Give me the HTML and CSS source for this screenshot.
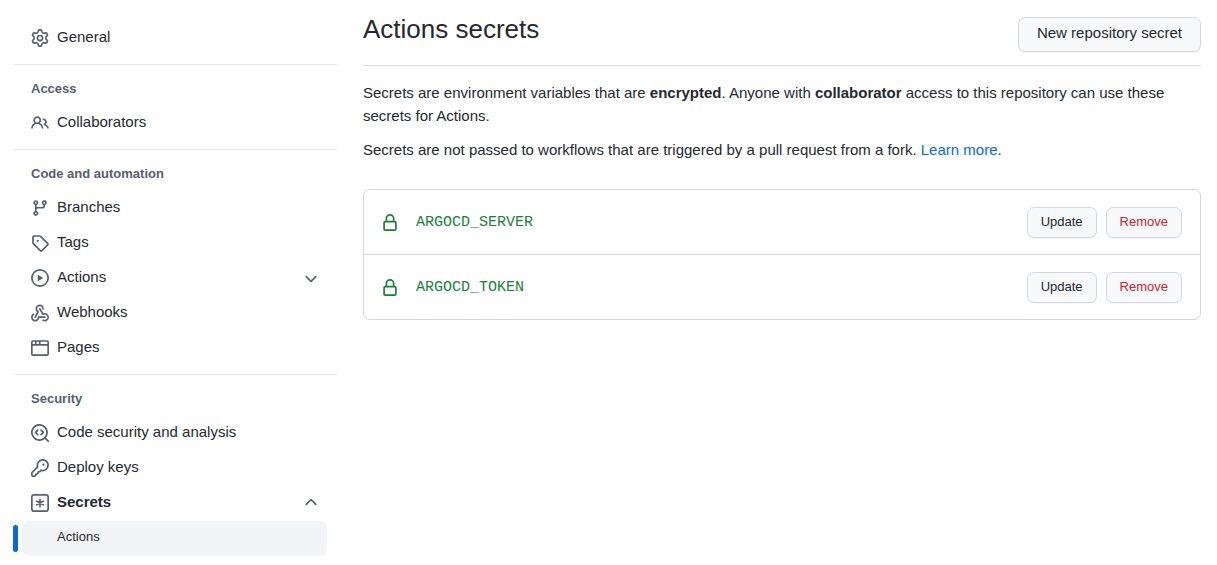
FILE: index.html
```html
<!DOCTYPE html>
<html lang="en">
<head>
<meta charset="utf-8">
<meta name="viewport" content="width=device-width, initial-scale=1">
<title>Actions secrets</title>
<link rel="stylesheet" href="styles.css">
</head>
<body>
<div class="layout">
  <nav class="sidebar" aria-label="Settings">
    <ul class="nav-list">
      <li><a class="nav-item" href="#general">
        <svg class="icon" viewBox="0 0 16 16" aria-hidden="true"><path fill-rule="evenodd" d="M8 0a8.2 8.2 0 0 1 .701.031C9.444.095 9.99.645 10.16 1.29l.288 1.107c.018.066.079.158.212.224.231.114.454.243.668.386.123.082.233.09.299.071l1.103-.303c.644-.176 1.392.021 1.82.63.27.385.506.792.704 1.218.315.675.111 1.422-.364 1.891l-.814.806c-.049.048-.098.147-.088.294.016.257.016.515 0 .772-.01.147.038.246.088.294l.814.806c.475.469.679 1.216.364 1.891a7.977 7.977 0 0 1-.704 1.217c-.428.61-1.176.807-1.82.63l-1.102-.302c-.067-.019-.177-.011-.3.071a5.909 5.909 0 0 1-.668.386c-.133.066-.194.158-.211.224l-.29 1.106c-.168.646-.715 1.196-1.458 1.26a8.006 8.006 0 0 1-1.402 0c-.743-.064-1.289-.614-1.458-1.26l-.289-1.106c-.018-.066-.079-.158-.212-.224a5.738 5.738 0 0 1-.668-.386c-.123-.082-.233-.09-.299-.071l-1.103.303c-.644.176-1.392-.021-1.82-.63a8.12 8.12 0 0 1-.704-1.218c-.315-.675-.111-1.422.363-1.891l.815-.806c.05-.048.098-.147.088-.294a6.214 6.214 0 0 1 0-.772c.01-.147-.038-.246-.088-.294l-.815-.806C.635 6.045.431 5.298.746 4.623a7.92 7.92 0 0 1 .704-1.217c.428-.61 1.176-.807 1.82-.63l1.102.302c.067.019.177.011.3-.071.214-.143.437-.272.668-.386.133-.066.194-.158.211-.224l.29-1.106C6.009.645 6.556.095 7.299.03 7.53.01 7.764 0 8 0Zm-.571 1.525c-.036.003-.108.036-.137.146l-.289 1.105c-.147.561-.549.967-.998 1.189-.173.086-.34.183-.5.29-.417.278-.97.423-1.529.27l-1.103-.303c-.109-.03-.175.016-.195.045-.22.312-.412.644-.573.99-.014.031-.021.11.059.19l.815.806c.411.406.562.957.53 1.456a4.709 4.709 0 0 0 0 .582c.032.499-.119 1.05-.53 1.456l-.815.806c-.081.08-.073.159-.059.19.162.346.353.677.573.989.02.03.085.076.195.046l1.102-.303c.56-.153 1.113-.008 1.53.27.161.107.328.204.501.29.447.222.85.629.997 1.189l.289 1.105c.029.109.101.143.137.146a6.6 6.6 0 0 0 1.142 0c.036-.003.108-.036.137-.146l.289-1.105c.147-.561.549-.967.998-1.189.173-.086.34-.183.5-.29.417-.278.97-.423 1.529-.27l1.103.303c.109.029.175-.016.195-.045.22-.313.411-.644.573-.99.014-.031.021-.11-.059-.19l-.815-.806c-.411-.406-.562-.957-.53-1.456a4.709 4.709 0 0 0 0-.582c-.032-.499.119-1.05.53-1.456l.815-.806c.081-.08.073-.159.059-.19a6.464 6.464 0 0 0-.573-.989c-.02-.03-.085-.076-.195-.046l-1.102.303c-.56.153-1.113.008-1.53-.27a4.44 4.44 0 0 0-.501-.29c-.447-.222-.85-.629-.997-1.189l-.289-1.105c-.029-.11-.101-.143-.137-.146a6.6 6.6 0 0 0-1.142 0ZM11 8a3 3 0 1 1-6 0 3 3 0 0 1 6 0ZM9.5 8a1.5 1.5 0 1 0-3 0 1.5 1.5 0 0 0 3 0Z"/></svg>
        <span class="nav-label">General</span></a></li>
    </ul>

    <h2 class="nav-heading">Access</h2>
    <ul class="nav-list">
      <li><a class="nav-item" href="#collaborators">
        <svg class="icon" viewBox="0 0 16 16" aria-hidden="true"><path fill-rule="evenodd" d="M2 5.5a3.5 3.5 0 1 1 5.898 2.549 5.508 5.508 0 0 1 3.034 4.084.75.75 0 1 1-1.482.235 4 4 0 0 0-7.9 0 .75.75 0 0 1-1.482-.236A5.507 5.507 0 0 1 3.102 8.05 3.493 3.493 0 0 1 2 5.5ZM11 4a3.001 3.001 0 0 1 2.22 5.018 5.01 5.01 0 0 1 2.56 3.012.749.749 0 0 1-.885.954.752.752 0 0 1-.549-.514 3.507 3.507 0 0 0-2.522-2.372.75.75 0 0 1-.574-.73v-.352a.75.75 0 0 1 .416-.672A1.5 1.5 0 0 0 11 5.5.75.75 0 0 1 11 4Zm-5.5-.5a2 2 0 1 0 0 4 2 2 0 0 0 0-4Z"/></svg>
        <span class="nav-label">Collaborators</span></a></li>
    </ul>

    <h2 class="nav-heading">Code and automation</h2>
    <ul class="nav-list">
      <li><a class="nav-item" href="#branches">
        <svg class="icon" viewBox="0 0 16 16" aria-hidden="true"><path fill-rule="evenodd" d="M9.5 3.25a2.25 2.25 0 1 1 3 2.122V6A2.5 2.5 0 0 1 10 8.5H6a1 1 0 0 0-1 1v1.128a2.251 2.251 0 1 1-1.5 0V5.372a2.25 2.25 0 1 1 1.5 0v1.836A2.493 2.493 0 0 1 6 7h4a1 1 0 0 0 1-1v-.628A2.25 2.25 0 0 1 9.5 3.25Zm-6 0a.75.75 0 1 0 1.5 0 .75.75 0 0 0-1.5 0Zm8.25-.75a.75.75 0 1 0 0 1.5.75.75 0 0 0 0-1.5ZM4.25 12a.75.75 0 1 0 0 1.5.75.75 0 0 0 0-1.5Z"/></svg>
        <span class="nav-label">Branches</span></a></li>
      <li><a class="nav-item" href="#tags">
        <svg class="icon" viewBox="0 0 16 16" aria-hidden="true"><path fill-rule="evenodd" d="M2.5 7.775V2.75a.25.25 0 0 1 .25-.25h5.025a.25.25 0 0 1 .177.073l6.25 6.25a.25.25 0 0 1 0 .354l-5.025 5.025a.25.25 0 0 1-.354 0l-6.25-6.25a.25.25 0 0 1-.073-.177Zm-1.5 0V2.75C1 1.784 1.784 1 2.75 1h5.025c.464 0 .91.184 1.238.513l6.25 6.25a1.75 1.75 0 0 1 0 2.474l-5.026 5.026a1.75 1.75 0 0 1-2.474 0l-6.25-6.25A1.75 1.75 0 0 1 1 7.775ZM6 5a1 1 0 1 0 0 2 1 1 0 0 0 0-2Z"/></svg>
        <span class="nav-label">Tags</span></a></li>
      <li><button class="nav-item" type="button" aria-expanded="false">
        <svg class="icon" viewBox="0 0 16 16" aria-hidden="true"><path fill-rule="evenodd" d="M1.5 8a6.5 6.5 0 1 1 13 0 6.5 6.5 0 0 1-13 0ZM8 0a8 8 0 1 0 0 16A8 8 0 0 0 8 0ZM6.379 5.227A.25.25 0 0 0 6 5.442v5.117a.25.25 0 0 0 .379.214l4.264-2.559a.25.25 0 0 0 0-.428L6.379 5.227Z"/></svg>
        <span class="nav-label">Actions</span>
        <svg class="icon" viewBox="0 0 16 16" aria-hidden="true"><path d="M12.78 6.22a.75.75 0 0 1 0 1.06l-4.25 4.25a.75.75 0 0 1-1.06 0L3.22 7.28a.75.75 0 0 1 1.06-1.06L8 9.94l3.72-3.72a.75.75 0 0 1 1.06 0Z"/></svg></button></li>
      <li><a class="nav-item" href="#webhooks">
        <svg class="icon" viewBox="0 0 16 16" aria-hidden="true"><path d="M5.5 4.25a2.25 2.25 0 0 1 4.5 0 .75.75 0 0 0 1.5 0 3.75 3.75 0 1 0-6.14 2.889l-2.272 4.258a.75.75 0 0 0 1.324.706L7 7.25a.75.75 0 0 0-.309-1.015A2.25 2.25 0 0 1 5.5 4.25Z"/><path d="M7.364 3.607a.75.75 0 0 1 1.03.257l2.608 4.349a3.75 3.75 0 1 1-.628 6.785.75.75 0 0 1 .752-1.299 2.25 2.25 0 1 0-.033-3.88.75.75 0 0 1-1.03-.256L7.107 4.636a.75.75 0 0 1 .257-1.03Z"/><path d="M2.9 8.776A.75.75 0 0 1 2.625 9.8 2.25 2.25 0 1 0 6 11.75a.75.75 0 0 1 .75-.751h5.5a.75.75 0 0 1 0 1.5H7.425a3.751 3.751 0 1 1-5.55-3.998.75.75 0 0 1 1.024.274Z"/></svg>
        <span class="nav-label">Webhooks</span></a></li>
      <li><a class="nav-item" href="#pages">
        <svg class="icon" viewBox="0 0 16 16" aria-hidden="true"><path fill-rule="evenodd" d="M0 2.75C0 1.784.784 1 1.75 1h12.5c.966 0 1.75.784 1.75 1.75v10.5A1.75 1.75 0 0 1 14.25 15H1.75A1.75 1.75 0 0 1 0 13.25ZM14.5 6h-13v7.25c0 .138.112.25.25.25h12.5a.25.25 0 0 0 .25-.25Zm-6-3.5v2h6V2.75a.25.25 0 0 0-.25-.25ZM5 2.5v2h2v-2Zm-3.25 0a.25.25 0 0 0-.25.25V4.5h2v-2Z"/></svg>
        <span class="nav-label">Pages</span></a></li>
    </ul>

    <h2 class="nav-heading">Security</h2>
    <ul class="nav-list">
      <li><a class="nav-item" href="#code-security">
        <svg class="icon" viewBox="0 0 16 16" aria-hidden="true"><path d="M8.47 4.97a.75.75 0 0 0 0 1.06L9.94 7.5 8.47 8.97a.75.75 0 1 0 1.06 1.06l2-2a.75.75 0 0 0 0-1.06l-2-2a.75.75 0 0 0-1.06 0ZM6.53 6.03a.75.75 0 0 0-1.06-1.06l-2 2a.75.75 0 0 0 0 1.06l2 2a.75.75 0 1 0 1.06-1.06L5.06 7.5l1.47-1.47Z"/><path fill-rule="evenodd" d="M12.246 13.307a7.5 7.5 0 1 1 1.06-1.06l2.474 2.473a.75.75 0 1 1-1.06 1.06l-2.474-2.473ZM1.5 7.5a6 6 0 1 0 12 0 6 6 0 0 0-12 0Z"/></svg>
        <span class="nav-label">Code security and analysis</span></a></li>
      <li><a class="nav-item" href="#deploy-keys">
        <svg class="icon" viewBox="0 0 16 16" aria-hidden="true"><path class="stroke" d="M5.95 7.05 1.05 11.95a1 1 0 0 0-.3.7v1.6a1 1 0 0 0 1 1h1.5a1 1 0 0 0 1-1v-.3a.7.7 0 0 1 .7-.7h.3a1 1 0 0 0 1-1v-.3a.7.7 0 0 1 .7-.7h.5a1 1 0 0 0 .7-.3l.9-.9A4.75 4.75 0 1 0 5.95 7.05Z"/><circle cx="11" cy="5" r="1"/></svg>
        <span class="nav-label">Deploy keys</span></a></li>
      <li>
        <button class="nav-item nav-item-open" type="button" aria-expanded="true">
        <svg class="icon" viewBox="0 0 16 16" aria-hidden="true"><rect class="stroke" x=".75" y=".75" width="14.5" height="14.5" rx="2"/><path class="stroke" d="M8 4.75v6.5M5.1 6.35l5.8 3.3M10.9 6.35l-5.8 3.3"/></svg>
        <span class="nav-label">Secrets</span>
        <svg class="icon" viewBox="0 0 16 16" aria-hidden="true"><path d="M3.22 9.78a.75.75 0 0 1 0-1.06l4.25-4.25a.75.75 0 0 1 1.06 0l4.25 4.25a.75.75 0 0 1-1.06 1.06L8 6.06 4.28 9.78a.75.75 0 0 1-1.06 0Z"/></svg></button>
        <ul class="nav-list">
          <li><a class="nav-subitem" href="#secrets-actions" aria-current="page">Actions</a></li>
        </ul>
      </li>
    </ul>
  </nav>

  <main class="content">
    <header class="page-header">
      <h1 class="page-title">Actions secrets</h1>
      <button class="btn" type="button">New repository secret</button>
    </header>
    <p class="text">Secrets are environment variables that are <strong>encrypted</strong>. Anyone with <strong>collaborator</strong> access to this repository can use these secrets for Actions.</p>
    <p class="text">Secrets are not passed to workflows that are triggered by a pull request from a fork. <a class="link" href="#learn-more">Learn more</a>.</p>

    <ul class="secrets">
      <li class="secret">
        <svg class="icon icon-lock" viewBox="0 0 16 16" aria-hidden="true"><path fill-rule="evenodd" d="M4 4v2h-.25A1.75 1.75 0 0 0 2 7.75v5.5c0 .966.784 1.75 1.75 1.75h8.5A1.75 1.75 0 0 0 14 13.25v-5.5A1.75 1.75 0 0 0 12.25 6H12V4a4 4 0 1 0-8 0Zm6.5 2V4a2.5 2.5 0 1 0-5 0v2h5ZM12 7.5h.25a.25.25 0 0 1 .25.25v5.5a.25.25 0 0 1-.25.25h-8.5a.25.25 0 0 1-.25-.25v-5.5a.25.25 0 0 1 .25-.25H12Z"/></svg>
        <code class="secret-name">ARGOCD_SERVER</code>
        <button class="btn btn-small" type="button">Update</button>
        <button class="btn btn-small btn-danger" type="button">Remove</button>
      </li>
      <li class="secret">
        <svg class="icon icon-lock" viewBox="0 0 16 16" aria-hidden="true"><path fill-rule="evenodd" d="M4 4v2h-.25A1.75 1.75 0 0 0 2 7.75v5.5c0 .966.784 1.75 1.75 1.75h8.5A1.75 1.75 0 0 0 14 13.25v-5.5A1.75 1.75 0 0 0 12.25 6H12V4a4 4 0 1 0-8 0Zm6.5 2V4a2.5 2.5 0 1 0-5 0v2h5ZM12 7.5h.25a.25.25 0 0 1 .25.25v5.5a.25.25 0 0 1-.25.25h-8.5a.25.25 0 0 1-.25-.25v-5.5a.25.25 0 0 1 .25-.25H12Z"/></svg>
        <code class="secret-name">ARGOCD_TOKEN</code>
        <button class="btn btn-small" type="button">Update</button>
        <button class="btn btn-small btn-danger" type="button">Remove</button>
      </li>
    </ul>
  </main>
</div>
</body>
</html>
```
FILE: styles.css
```css
*,
*::before {
  box-sizing: border-box;
}

body {
  margin: 0;
  background: #fff;
  color: #24292f;
  font-family: "Liberation Sans", Arial, sans-serif;
  font-size: 15px;
  line-height: 23px;
}

.layout {
  display: grid;
  grid-template-columns: 323px minmax(0, 1fr);
  gap: 26px;
  padding: 0 16px 0 14px;
}

/* Sidebar */

.sidebar {
  padding: 21px 0 8px;
}

.nav-list {
  margin: 0;
  padding: 0;
  list-style: none;
}

.nav-heading {
  margin: 8px 0 0;
  padding: 14px 17px 7px;
  border-top: 1px solid #e6e9ec;
  color: #57606a;
  font-size: 13px;
  font-weight: 700;
  line-height: 20px;
}

.nav-item {
  display: flex;
  align-items: center;
  gap: 8px;
  width: 100%;
  padding: 4px 17px 8px;
  border: 0;
  background: none;
  color: inherit;
  font: inherit;
  text-align: left;
  text-decoration: none;
}

button.nav-item {
  cursor: pointer;
}

.nav-item .icon {
  margin-top: 3px;
}

.nav-label {
  flex: 1;
}

.nav-item-open {
  font-weight: 700;
}

.icon {
  flex: none;
  width: 18px;
  height: 18px;
  fill: #57606a;
}

.stroke {
  fill: none;
  stroke: #57606a;
  stroke-width: 1.5;
  stroke-linecap: round;
}

.nav-subitem {
  position: relative;
  display: block;
  margin: 0 10px 0 8px;
  padding: 4px 35px 8px;
  border-radius: 7px;
  background: #f3f4f6;
  color: inherit;
  font-size: 13px;
  text-decoration: none;
}

.nav-subitem::before {
  content: "";
  position: absolute;
  top: 4px;
  bottom: 4px;
  left: -9px;
  width: 5px;
  border-radius: 7px;
  background: #0969da;
}

/* Content */

.content {
  padding-top: 11px;
}

.page-header {
  display: flex;
  align-items: flex-start;
  justify-content: space-between;
  gap: 16px;
  margin-bottom: 15px;
  padding-bottom: 13px;
  border-bottom: 1px solid #d8dee4;
}

.page-title {
  margin: 0;
  font-size: 26px;
  font-weight: 400;
  line-height: 36px;
}

.page-header .btn {
  margin-top: 6px;
}

.text {
  margin: 0 0 11px;
}

.link {
  color: #0969da;
  text-decoration: none;
}

.btn {
  padding: 3px 18px 7px;
  border: 1px solid #d5d8da;
  border-radius: 7px;
  background: #f6f8fa;
  box-shadow: 0 1px 0 rgba(27, 31, 36, 0.04);
  color: #24292f;
  font: inherit;
  white-space: nowrap;
  cursor: pointer;
}

.btn-small {
  padding: 3px 13px 5px;
  font-size: 13px;
  line-height: 21px;
}

.btn-danger {
  color: #cf222e;
}

.secrets {
  margin: 28px 0 0;
  padding: 0;
  border: 1px solid #d0d7de;
  border-radius: 7px;
  list-style: none;
}

.secret {
  display: flex;
  align-items: center;
  gap: 9px;
  padding: 17px 18px 16px 17px;
}

.secret + .secret {
  border-top: 1px solid #d0d7de;
}

.icon-lock {
  fill: #1a7f37;
}

.secret-name {
  flex: 1;
  padding-left: 8px;
  color: #1a7f37;
  font-family: "Liberation Mono", monospace;
  font-size: 15px;
}
```
